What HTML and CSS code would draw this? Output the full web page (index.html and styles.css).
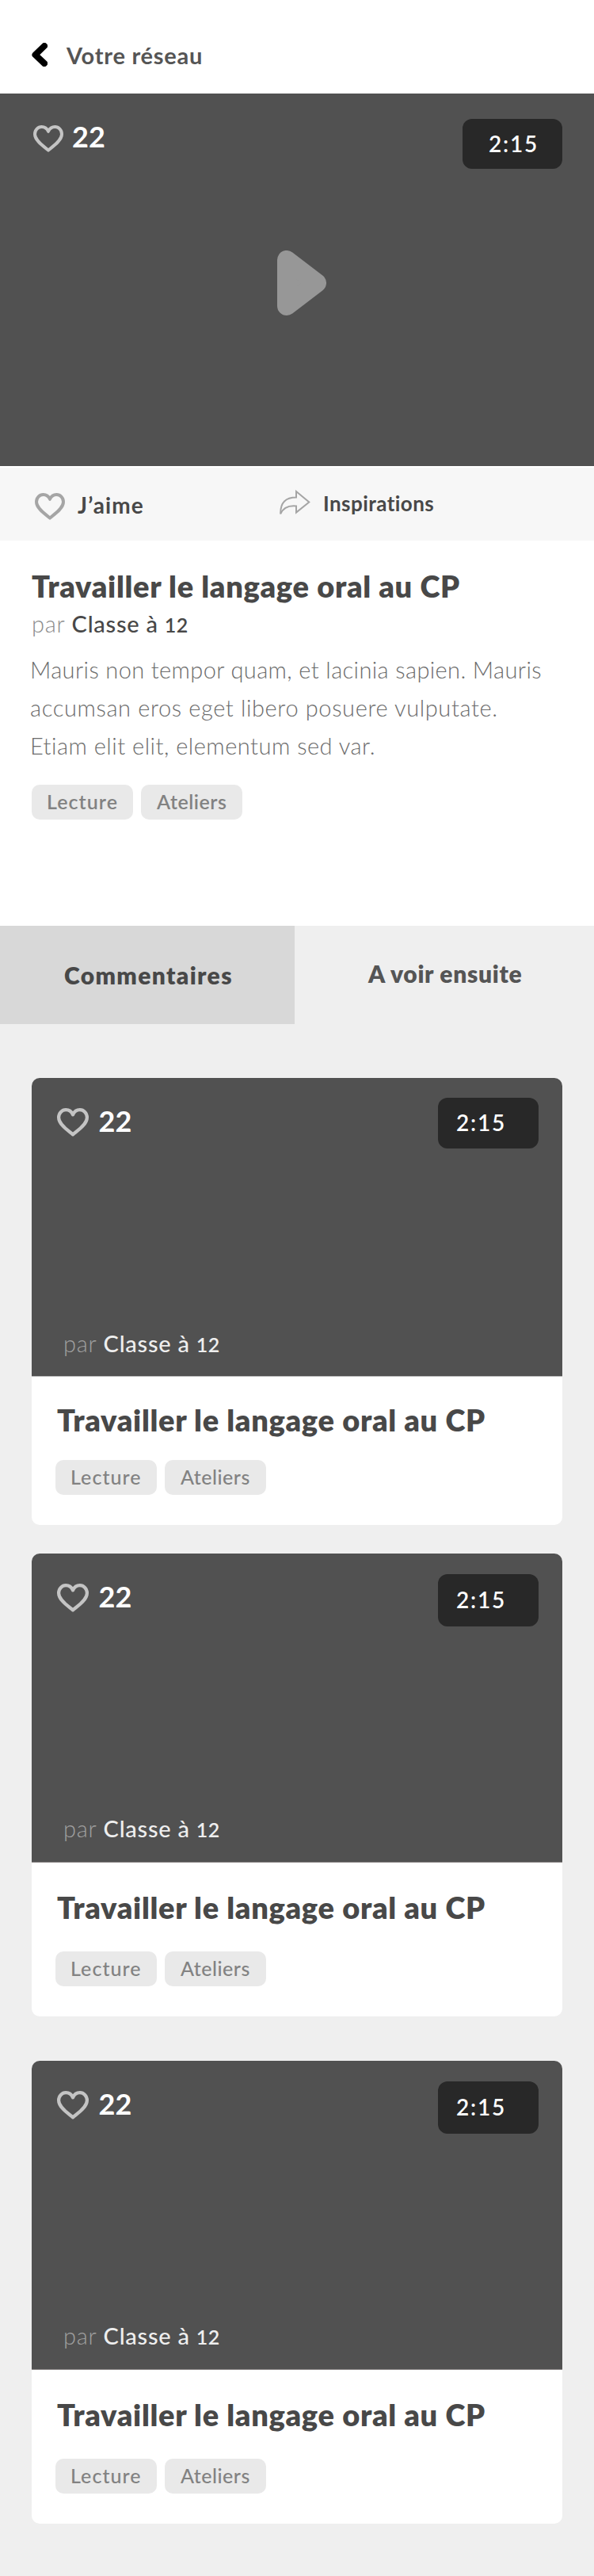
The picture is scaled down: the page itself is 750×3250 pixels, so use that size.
FILE: index.html
```html
<!DOCTYPE html>
<html lang="fr">
<head>
<meta charset="utf-8">
<title>Votre réseau</title>
<link rel="stylesheet" href="styles.css">
</head>
<body>
<svg class="defs" width="0" height="0" aria-hidden="true">
  <symbol id="heart" viewBox="0 0 38 34">
    <path d="M19 31.6 C15 27.8 2 20 2 11.2 C2 5.8 6 2 10.6 2 C14.4 2 17.4 4.2 19 7.8 C20.6 4.2 23.6 2 27.4 2 C32 2 36 5.8 36 11.2 C36 20 23 27.8 19 31.6 Z" fill="none" stroke="currentColor" stroke-width="4" stroke-linejoin="round"/>
  </symbol>
</svg>
<header class="topbar">
  <svg class="back" width="20" height="30" viewBox="0 0 20 30"><path d="M16 4 L4.5 15.2 L16 26" fill="none" stroke="#000" stroke-width="8" stroke-linecap="round" stroke-linejoin="round"/></svg>
  <span class="topbar-title">Votre réseau</span>
</header>

<section class="player">
  <div class="likes"><svg class="heart"><use href="#heart"/></svg><span class="count">22</span></div>
  <div class="badge">2:15</div>
  <svg class="play" width="62" height="82" viewBox="0 0 62 82"><path d="M12 12 V70 L50 41 Z" fill="#979797" stroke="#979797" stroke-width="24" stroke-linejoin="round"/></svg>
</section>

<nav class="actions">
  <div class="action like"><svg class="heart"><use href="#heart"/></svg><span>J’aime</span></div>
  <div class="action share"><svg width="40" height="34" viewBox="0 0 40 34"><path d="M21 2 L37.3 15.5 L21 28.6 V20.4 C11 19.5 4 23.5 1.2 30.5 C0.8 15.5 8 9.6 21 9.6 Z" fill="none" stroke="#a5a5a5" stroke-width="2"/></svg><span>Inspirations</span></div>
</nav>

<section class="info">
  <h1 class="title">Travailler le langage oral au CP</h1>
  <div class="byline"><span class="by">par</span> Classe à <span class="num">12</span></div>
  <p class="desc"><span>Mauris non tempor quam, et lacinia sapien. Mauris</span> <span class="l2">accumsan eros eget libero posuere vulputate.</span> <span class="l3">Etiam elit elit, elementum sed var.</span></p>
  <div class="tags"><span class="tag">Lecture</span><span class="tag t2">Ateliers</span></div>
</section>

<div class="tabs">
  <div class="tab active">Commentaires</div>
  <div class="tab next">A voir ensuite</div>
</div>

<main class="cards">
  <article class="card compact">
    <div class="thumb">
      <div class="thumb-top"><div class="likes"><svg class="heart"><use href="#heart"/></svg><span class="count">22</span></div><div class="badge">2:15</div></div>
      <div class="byline"><span class="by">par</span> Classe à <span class="num">12</span></div>
    </div>
    <div class="body"><h2 class="title">Travailler le langage oral au CP</h2><div class="tags"><span class="tag">Lecture</span><span class="tag t2">Ateliers</span></div></div>
  </article>
  <article class="card">
    <div class="thumb">
      <div class="thumb-top"><div class="likes"><svg class="heart"><use href="#heart"/></svg><span class="count">22</span></div><div class="badge">2:15</div></div>
      <div class="byline"><span class="by">par</span> Classe à <span class="num">12</span></div>
    </div>
    <div class="body"><h2 class="title">Travailler le langage oral au CP</h2><div class="tags"><span class="tag">Lecture</span><span class="tag t2">Ateliers</span></div></div>
  </article>
  <article class="card">
    <div class="thumb">
      <div class="thumb-top"><div class="likes"><svg class="heart"><use href="#heart"/></svg><span class="count">22</span></div><div class="badge">2:15</div></div>
      <div class="byline"><span class="by">par</span> Classe à <span class="num">12</span></div>
    </div>
    <div class="body"><h2 class="title">Travailler le langage oral au CP</h2><div class="tags"><span class="tag">Lecture</span><span class="tag t2">Ateliers</span></div></div>
  </article>
</main>
</body>
</html>
```
FILE: styles.css
```css
* { box-sizing: border-box; }
body { margin: 0; background: #efefef; font-family: Lato, "Liberation Sans", sans-serif; color: #484848; }
h1, h2, p { margin: 0; }
svg { display: block; flex: none; }
.defs { position: absolute; }

.topbar { display: flex; height: 118px; padding-left: 40px; gap: 24px; background: #fff; }
.back { margin-top: 54px; }
.topbar-title { margin-top: 53px; font-size: 29px; line-height: 34px; font-weight: 700; letter-spacing: .75px; color: #555; }

.player { position: relative; display: flex; justify-content: space-between; align-items: flex-start; height: 470px; padding: 32px 40px 0 42px; background: #515151; }
.play { position: absolute; left: 350px; top: 198px; }
.likes { display: flex; gap: 11px; color: #c4c4c4; }
.heart { width: 38px; height: 34px; margin-top: 8px; }
.count { font-size: 36px; line-height: 44px; font-weight: 700; color: #fff; }
.badge { width: 126px; height: 63px; padding: 14px 0 0 33px; border-radius: 12px; background: #282828; color: #fff; font-size: 28px; line-height: 34px; font-weight: 600; letter-spacing: 1.8px; }

.actions { display: flex; height: 94px; border-top: 2px solid #fff; background: #f7f7f7; }
.action { display: flex; font-weight: 700; }
.like { width: 310px; padding: 30px 0 0 44px; gap: 16px; font-size: 28px; line-height: 34px; letter-spacing: 1.1px; }
.like .heart { margin-top: 2px; color: #a5a5a5; }
.share { padding: 28px 0 0 43px; gap: 15px; font-size: 26px; line-height: 32px; letter-spacing: .45px; }
.share span { margin-top: 1px; }

.info { height: 486px; padding: 35px 40px 0; background: #fff; }
.title { font-size: 38px; line-height: 44px; font-weight: 800; letter-spacing: .68px; white-space: nowrap; }
.byline { height: 34px; font-size: 29px; line-height: 34px; font-weight: 500; letter-spacing: .75px; white-space: nowrap; }
.by { font-weight: 300; color: #8c8c8c; }
.num { font-size: 25px; line-height: 1; font-weight: 600; letter-spacing: .4px; }
.info .byline { margin-top: 9px; }
.desc { margin: 17px 0 0 -2px; font-size: 29px; line-height: 48px; font-weight: 300; color: #6c6c6c; letter-spacing: .38px; white-space: nowrap; }
.desc span { display: block; }
.desc .l2 { letter-spacing: .62px; }
.desc .l3 { letter-spacing: .5px; }
.tags { display: flex; gap: 10px; margin-top: 25px; }
.tag { width: 128px; height: 44px; padding: 6px 0 0 19px; border-radius: 10px; background: #e9e9e9; color: #828282; font-size: 25px; line-height: 30px; font-weight: 600; letter-spacing: 1.05px; }
.t2 { padding-left: 20px; letter-spacing: .5px; }

.tabs { display: flex; height: 124px; font-size: 30px; line-height: 36px; font-weight: 800; }
.tab.active { width: 372px; padding: 44px 0 0 81px; background: #d8d8d8; letter-spacing: 1.35px; }
.tab.next { padding: 42px 0 0 93px; color: #555; letter-spacing: .7px; }

.cards { padding: 68px 40px 66px; }
.card { overflow: hidden; margin-bottom: 56px; border-radius: 10px; background: #fff; }
.card:last-child { margin-bottom: 0; }
.thumb { display: flex; flex-direction: column; justify-content: space-between; height: 390px; padding: 26px 30px 25px 32px; border-bottom: 1px solid #8e8a8a; background: #515151; color: #eee; }
.thumb-top { display: flex; justify-content: space-between; align-items: flex-start; }
.thumb .likes { margin-top: 6px; gap: 12.5px; }
.thumb .heart { width: 40px; height: 36px; margin-top: 6px; }
.thumb .badge { width: 127px; height: 66px; padding: 15px 0 0 23px; }
.thumb .byline { padding-left: 8px; }
.thumb .by { color: #a0a0a0; }
.body { padding: 34px 30px 38px; }
.body .title { padding-left: 2px; }
.body .tags { margin-top: 34px; }
.body .tag { font-weight: 500; }
.compact { margin-bottom: 36px; }
.compact .thumb { height: 377px; padding-top: 25px; padding-bottom: 24px; border-bottom-color: #bababa; }
.compact .likes { margin-top: 7px; }
.compact .badge { height: 64px; padding-top: 14px; }
.compact .body { padding-top: 32px; }
.body .tags { margin-top: 34px; }
.compact .body .tags { margin-top: 29px; }
```
